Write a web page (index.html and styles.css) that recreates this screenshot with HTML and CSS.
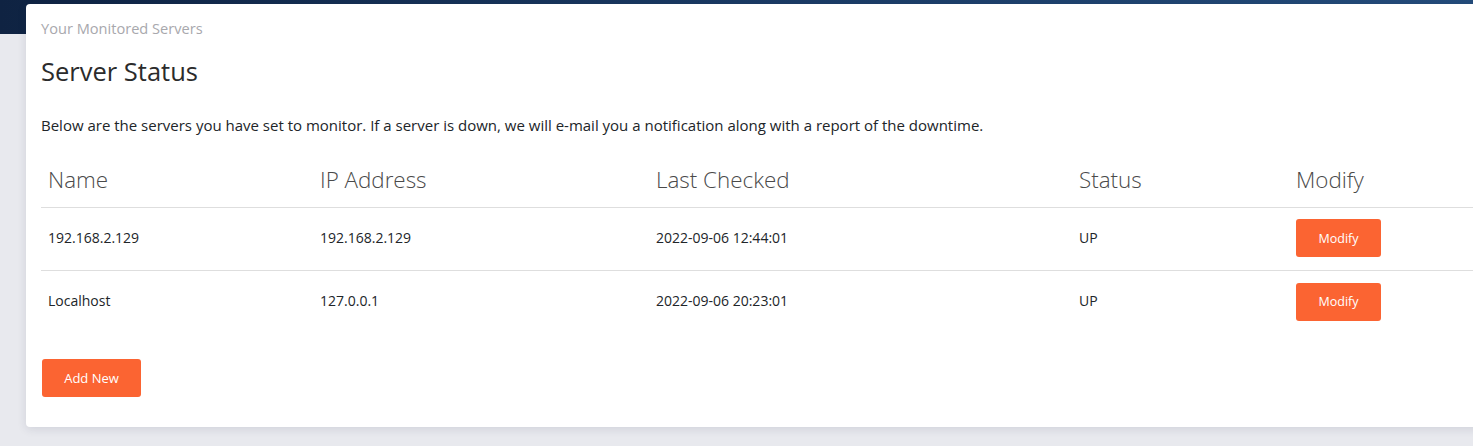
FILE: index.html
```html
<!DOCTYPE html>
<html>
<head>
<meta charset="utf-8">
<link rel="stylesheet" href="styles.css">
</head>
<body>
<div class="topband"></div>
<main class="card">
  <div class="crumb">Your Monitored Servers</div>
  <h1 class="title">Server Status</h1>
  <p class="intro">Below are the servers you have set to monitor. If a server is down, we will e-mail you a notification along with a report of the downtime.</p>
  <table class="servers">
    <thead>
      <tr>
        <th class="c-name">Name</th>
        <th class="c-ip">IP Address</th>
        <th class="c-last">Last Checked</th>
        <th class="c-status">Status</th>
        <th class="c-mod">Modify</th>
      </tr>
    </thead>
    <tbody>
      <tr>
        <td>192.168.2.129</td>
        <td>192.168.2.129</td>
        <td>2022-09-06 12:44:01</td>
        <td>UP</td>
        <td><button class="btn btn-mod">Modify</button></td>
      </tr>
      <tr>
        <td>Localhost</td>
        <td>127.0.0.1</td>
        <td>2022-09-06 20:23:01</td>
        <td>UP</td>
        <td><button class="btn btn-mod">Modify</button></td>
      </tr>
    </tbody>
  </table>
  <button class="btn btn-add">Add New</button>
</main>
</body>
</html>
```
FILE: styles.css
```css
html, body {
  margin: 0;
  padding: 0;
  overflow: hidden;
}
body {
  background: #e8e9ee;
  font-family: "Open Sans", "Liberation Sans", sans-serif;
  color: #212529;
  height: 446px;
}
.topband {
  height: 34px;
  background: linear-gradient(90deg, #0f2342 0%, #1a3a63 50%, #244c7b 100%);
}
.card {
  margin: -30px 0 0 26px;
  width: 1500px;
  height: 423px;
  box-sizing: border-box;
  background: #fff;
  border-radius: 4px;
  box-shadow: 0 2px 10px rgba(30, 40, 70, 0.12);
  padding: 14px 15px 0 15px;
}
.crumb {
  font-size: 14.6px;
  line-height: 20px;
  color: #a8a8ad;
}
.title {
  margin: 18px 0 0 0;
  font-size: 25.5px;
  font-weight: 400;
  line-height: 30px;
  color: #2b2b2b;
}
.intro {
  margin: 29px 0 0 0;
  font-size: 15px;
  line-height: 21px;
}
.servers {
  margin-top: 18px;
  width: 1445px;
  border-collapse: collapse;
}
.servers th {
  text-align: left;
  font-weight: 300;
  font-size: 22.4px;
  line-height: 30px;
  color: #4a4a4a;
  padding: 11px 7px 12px 7px;
  border-bottom: 1px solid #dedede;
}
.servers td {
  font-size: 14px;
  line-height: 38px;
  padding: 10px 7px 13px 7px;
  border-top: 1px solid #dedede;
}
.servers tbody tr:first-child td { border-top: none; }
.c-name { width: 258px; }
.c-ip { width: 322px; }
.c-last { width: 409px; }
.c-status { width: 203px; }
.btn {
  background: #fb6432;
  color: #fff;
  border: none;
  border-radius: 3px;
  font-family: inherit;
  font-size: 12.5px;
  height: 38px;
  cursor: pointer;
}
.btn-mod { width: 85px; vertical-align: middle; }
.btn-add { width: 99px; margin: 25px 0 0 1px; font-size: 13px; }
```
